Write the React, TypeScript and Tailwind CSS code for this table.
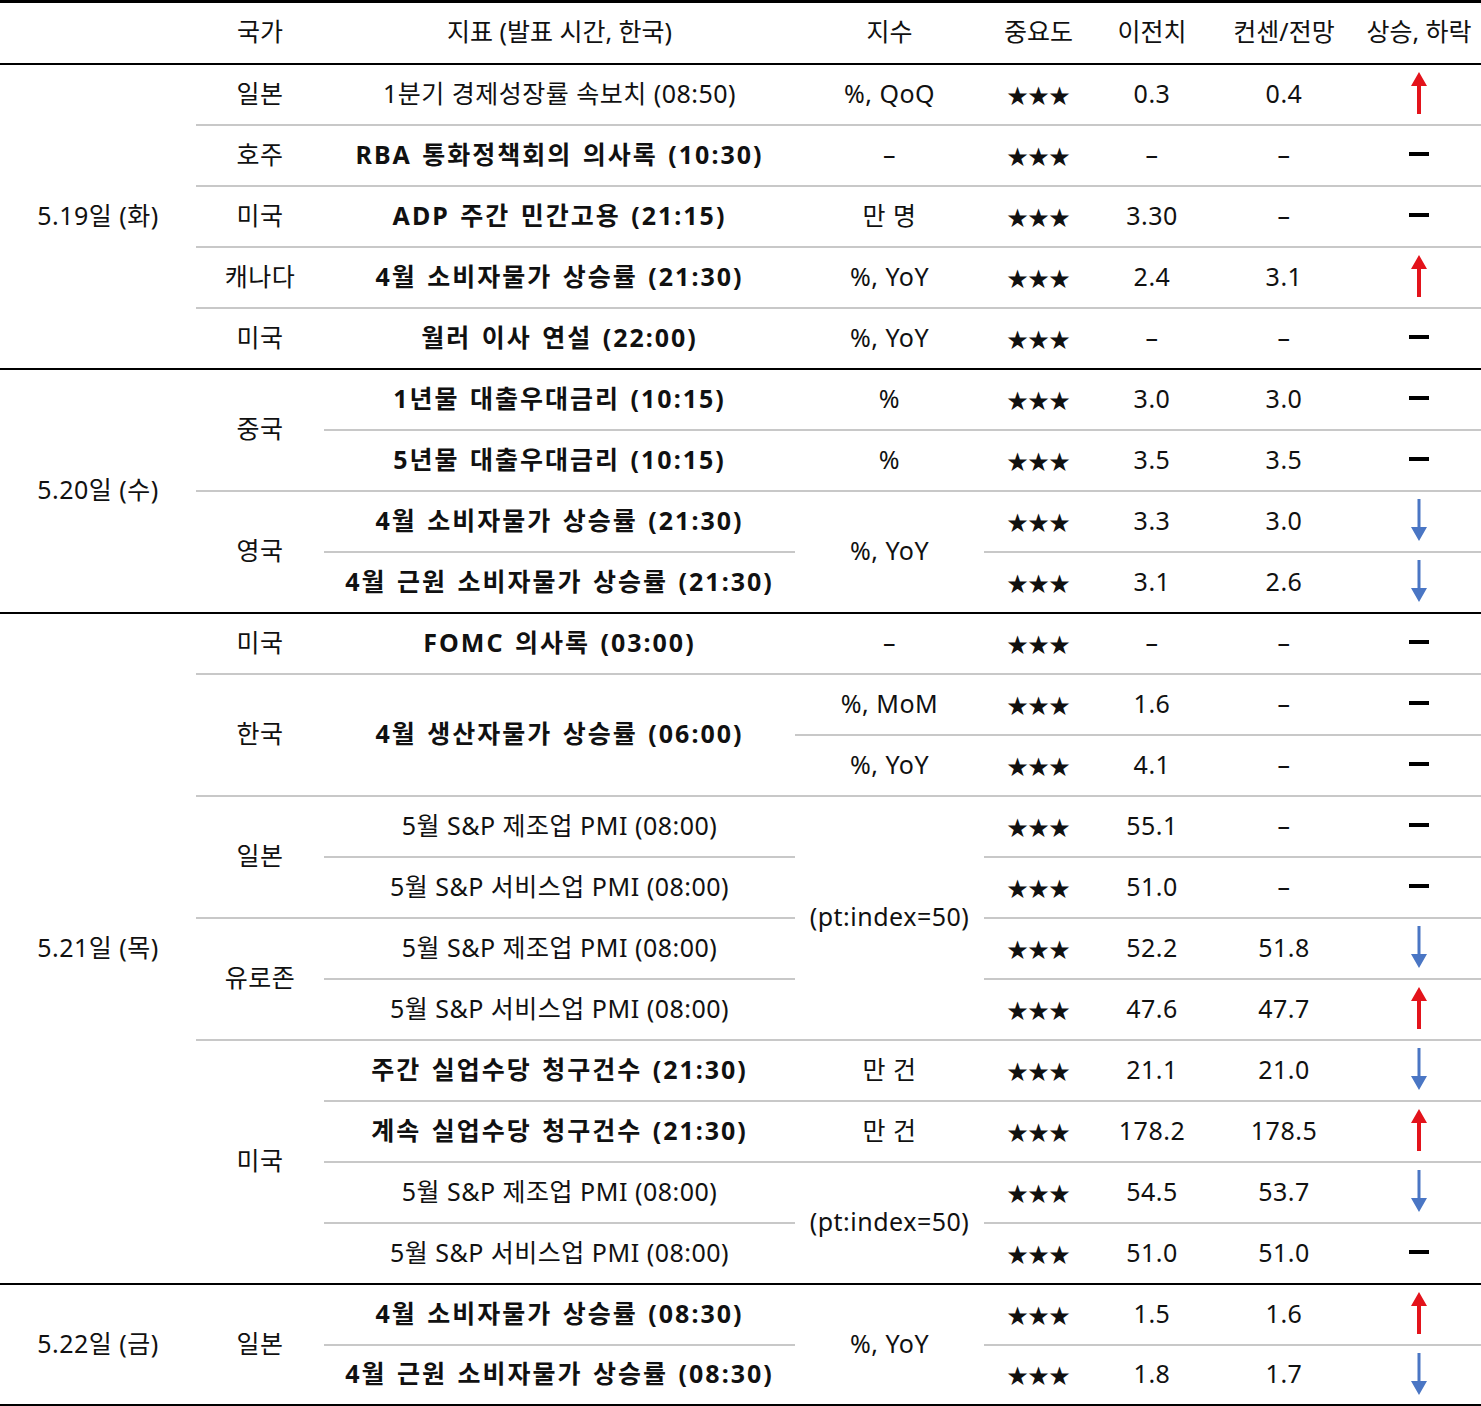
import React from "react";

type Top = "k" | "g";
type Cell = { t: React.ReactNode; rs?: number; b?: boolean; top?: Top };

const Up = () => (
  <svg width="18" height="42" viewBox="0 0 18 42" className="mx-auto block">
    <polygon points="9,0 17,14 11,14 11,42 7,42 7,14 1,14" fill="#e3131b" />
  </svg>
);
const Down = () => (
  <svg width="18" height="42" viewBox="0 0 18 42" className="mx-auto block">
    <polygon points="7.5,0 10.5,0 10.5,28 17,28 9,42 1,28 7.5,28" fill="#4a76c4" />
  </svg>
);
const Flat = () => <div className="mx-auto h-[4px] w-[20px] bg-black" />;

const S = "★★★";

const STAR = (top?: Top): Cell => ({ t: <span className="text-[21px] tracking-[0px]">{S}</span>, top });

type Row = Cell[];

function grp(rows: Row[]): Row[] {
  return rows.map((r, i) => r.map((c) => ({ ...c, top: i === 0 ? "k" : "g" })));
}

const D = "–";

const rows: Row[] = [
  ...grp([
    [
      { t: "5.19일 (화)", rs: 5 },
      { t: "일본" },
      { t: "1분기 경제성장률 속보치 (08:50)" },
      { t: "%, QoQ" },
      STAR(),
      { t: "0.3" },
      { t: "0.4" },
      { t: <Up /> },
    ],
    [
      { t: "호주" },
      { t: "RBA 통화정책회의 의사록 (10:30)", b: true },
      { t: D },
      STAR(),
      { t: D },
      { t: D },
      { t: <Flat /> },
    ],
    [
      { t: "미국" },
      { t: "ADP 주간 민간고용 (21:15)", b: true },
      { t: "만 명" },
      STAR(),
      { t: "3.30" },
      { t: D },
      { t: <Flat /> },
    ],
    [
      { t: "캐나다" },
      { t: "4월 소비자물가 상승률 (21:30)", b: true },
      { t: "%, YoY" },
      STAR(),
      { t: "2.4" },
      { t: "3.1" },
      { t: <Up /> },
    ],
    [
      { t: "미국" },
      { t: "월러 이사 연설 (22:00)", b: true },
      { t: "%, YoY" },
      STAR(),
      { t: D },
      { t: D },
      { t: <Flat /> },
    ],
  ]),
  ...grp([
    [
      { t: "5.20일 (수)", rs: 4 },
      { t: "중국", rs: 2 },
      { t: "1년물 대출우대금리 (10:15)", b: true },
      { t: "%" },
      STAR(),
      { t: "3.0" },
      { t: "3.0" },
      { t: <Flat /> },
    ],
    [
      { t: "5년물 대출우대금리 (10:15)", b: true },
      { t: "%" },
      STAR(),
      { t: "3.5" },
      { t: "3.5" },
      { t: <Flat /> },
    ],
    [
      { t: "영국", rs: 2 },
      { t: "4월 소비자물가 상승률 (21:30)", b: true },
      { t: "%, YoY", rs: 2 },
      STAR(),
      { t: "3.3" },
      { t: "3.0" },
      { t: <Down /> },
    ],
    [
      { t: "4월 근원 소비자물가 상승률 (21:30)", b: true },
      STAR(),
      { t: "3.1" },
      { t: "2.6" },
      { t: <Down /> },
    ],
  ]),
  ...grp([
    [
      { t: "5.21일 (목)", rs: 11 },
      { t: "미국" },
      { t: "FOMC 의사록 (03:00)", b: true },
      { t: D },
      STAR(),
      { t: D },
      { t: D },
      { t: <Flat /> },
    ],
    [
      { t: "한국", rs: 2 },
      { t: "4월 생산자물가 상승률 (06:00)", b: true, rs: 2 },
      { t: "%, MoM" },
      STAR(),
      { t: "1.6" },
      { t: D },
      { t: <Flat /> },
    ],
    [{ t: "%, YoY" }, STAR(), { t: "4.1" }, { t: D }, { t: <Flat /> }],
    [
      { t: "일본", rs: 2 },
      { t: "5월 S&P 제조업 PMI (08:00)" },
      { t: "(pt:index=50)", rs: 4 },
      STAR(),
      { t: "55.1" },
      { t: D },
      { t: <Flat /> },
    ],
    [
      { t: "5월 S&P 서비스업 PMI (08:00)" },
      STAR(),
      { t: "51.0" },
      { t: D },
      { t: <Flat /> },
    ],
    [
      { t: "유로존", rs: 2 },
      { t: "5월 S&P 제조업 PMI (08:00)" },
      STAR(),
      { t: "52.2" },
      { t: "51.8" },
      { t: <Down /> },
    ],
    [
      { t: "5월 S&P 서비스업 PMI (08:00)" },
      STAR(),
      { t: "47.6" },
      { t: "47.7" },
      { t: <Up /> },
    ],
    [
      { t: "미국", rs: 4 },
      { t: "주간 실업수당 청구건수 (21:30)", b: true },
      { t: "만 건" },
      STAR(),
      { t: "21.1" },
      { t: "21.0" },
      { t: <Down /> },
    ],
    [
      { t: "계속 실업수당 청구건수 (21:30)", b: true },
      { t: "만 건" },
      STAR(),
      { t: "178.2" },
      { t: "178.5" },
      { t: <Up /> },
    ],
    [
      { t: "5월 S&P 제조업 PMI (08:00)" },
      { t: "(pt:index=50)", rs: 2 },
      STAR(),
      { t: "54.5" },
      { t: "53.7" },
      { t: <Down /> },
    ],
    [
      { t: "5월 S&P 서비스업 PMI (08:00)" },
      STAR(),
      { t: "51.0" },
      { t: "51.0" },
      { t: <Flat /> },
    ],
  ]),
  ...grp([
    [
      { t: "5.22일 (금)", rs: 2 },
      { t: "일본", rs: 2 },
      { t: "4월 소비자물가 상승률 (08:30)", b: true },
      { t: "%, YoY", rs: 2 },
      STAR(),
      { t: "1.5" },
      { t: "1.6" },
      { t: <Up /> },
    ],
    [
      { t: "4월 근원 소비자물가 상승률 (08:30)", b: true },
      STAR(),
      { t: "1.8" },
      { t: "1.7" },
      { t: <Down /> },
    ],
  ]),
];

const headers = ["", "국가", "지표 (발표 시간, 한국)", "지수", "중요도", "이전치", "컨센/전망", "상승, 하락"];
const widths = [196, 128, 471, 189, 109, 118, 146, 124];

export default function App() {
  return (
    <div
      className="w-[1481px] bg-white text-[#111]"
      style={{ fontFamily: '"Noto Sans", "Noto Sans CJK KR", sans-serif' }}
    >
      <table className="w-[1481px] table-fixed border-collapse">
        <colgroup>
          {widths.map((w, i) => (
            <col key={i} style={{ width: w }} />
          ))}
        </colgroup>
        <thead>
          <tr className="h-[62px]">
            {headers.map((h, i) => (
              <th
                key={i}
                className="border-t-[3px] border-b-2 border-black p-0 pb-[2px] text-center align-middle text-[25px] font-normal leading-none"
              >
                {h}
              </th>
            ))}
          </tr>
        </thead>
        <tbody>
          {rows.map((r, ri) => (
            <tr key={ri} className="h-[61px]">
              {r.map((c, ci) => (
                <td
                  key={ci}
                  rowSpan={c.rs}
                  className={
                    "p-0 pb-[2px] text-center align-middle text-[25px] leading-none whitespace-nowrap " +
                    (c.top === "k" ? "border-t-2 border-black " : "border-t-2 border-[#c8c8c8] ") +
                    (ri === rows.length - 1 || (c.rs && ri + c.rs === rows.length)
                      ? "border-b-[3px] border-b-black "
                      : "") +
                    (c.b
                      ? "font-bold tracking-[2px] [word-spacing:2px]"
                      : "font-normal tracking-[0.5px]")
                  }
                >
                  {c.t}
                </td>
              ))}
            </tr>
          ))}
        </tbody>
      </table>
    </div>
  );
}
